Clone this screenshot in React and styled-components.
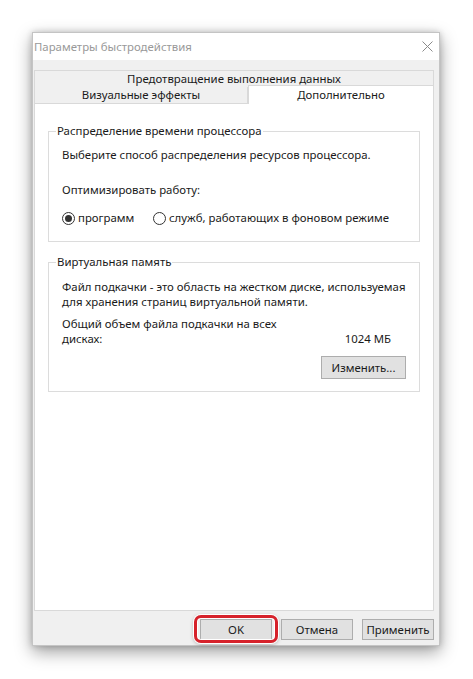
import React from 'react';
import styled, { createGlobalStyle } from 'styled-components';

const GlobalStyle = createGlobalStyle`
    html, body {
        margin: 0;
        background: #ffffff;
    }
    body {
        font-family: "Noto Sans", "Open Sans", sans-serif;
        font-size: 11.4px;
        color: #1a1a1a;
    }
`;

const Page = styled.div`
    padding: 32px 0 0 32px;
    width: 473px;
    height: 679px;
    box-sizing: border-box;
`;

const Window = styled.div`
    width: 408px;
    height: 614px;
    display: flex;
    flex-direction: column;
    background: #f0f0f0;
    border: 1px solid #c4c4c4;
    box-sizing: border-box;
    box-shadow: 0 6px 16px rgba(0, 0, 0, 0.38), 0 0 6px rgba(0, 0, 0, 0.18);
`;

const TitleBar = styled.div`
    height: 27px;
    flex: none;
    background: #ffffff;
    display: flex;
    align-items: center;
    justify-content: space-between;
    padding: 0 6px 0 1px;
`;

const Title = styled.span`
    color: #999999;
`;

const CloseIcon = () => (
    <svg width="11" height="11" viewBox="0 0 11 11">
        <path d="M0.5 0.5 L10.5 10.5 M10.5 0.5 L0.5 10.5" stroke="#8a8a8a" strokeWidth="1" />
    </svg>
);

const Body = styled.div`
    flex: 1;
    display: flex;
    flex-direction: column;
    padding: 10px 5px 0 1px;
    min-height: 0;
`;

const TabRow = styled.div`
    display: flex;
    align-items: flex-end;
    height: ${p => p.$h}px;
    margin-bottom: ${p => (p.$last ? -1 : 0)}px;
`;

const Tab = styled.div`
    flex: ${p => (p.$w ? `0 0 ${p.$w}px` : 1)};
    height: ${p => (p.$active ? 19 : p.$h)}px;
    box-sizing: border-box;
    display: flex;
    align-items: ${p => (p.$active ? 'flex-start' : 'center')};
    justify-content: center;
    background: ${p => (p.$active ? '#ffffff' : '#f0f0f0')};
    border: 1px solid #d9d9d9;
    border-bottom: ${p => (p.$active ? 'none' : '1px solid #d9d9d9')};
    border-top: ${p => (p.$noTop ? 'none' : '1px solid #d9d9d9')};
    position: relative;
    z-index: ${p => (p.$active ? 2 : 1)};
    line-height: 16px;
    padding-top: ${p => (p.$active ? 1 : 0)}px;
`;

const Panel = styled.div`
    flex: 1;
    background: #ffffff;
    border: 1px solid #d9d9d9;
    padding: 19px 13px 0 13px;
    display: flex;
    flex-direction: column;
`;

const Group = styled.fieldset`
    margin: 0 0 ${p => p.$mb || 0}px 0;
    padding: 0 13px ${p => p.$pb}px 13px;
    border: 1px solid #dcdcdc;
    min-width: 0;
`;

const Legend = styled.legend`
    padding: 0 1px;
    margin-left: -6px;
    line-height: 16px;
`;

const Line = styled.div`
    line-height: ${p => p.$lh || 16}px;
    margin-top: ${p => p.$mt}px;
`;

const RadioRow = styled.div`
    display: flex;
    align-items: center;
    margin-top: 12px;
    line-height: 16px;
`;

const RadioLabel = styled.label`
    display: flex;
    align-items: center;
    gap: 3px;
    width: ${p => (p.$w ? `${p.$w}px` : 'auto')};
`;

const RadioCircle = styled.span`
    width: 11px;
    height: 11px;
    border: 1px solid #333333;
    border-radius: 50%;
    display: flex;
    align-items: center;
    justify-content: center;
    flex: none;
    &::after {
        content: '';
        width: 7px;
        height: 7px;
        border-radius: 50%;
        background: ${p => (p.$checked ? '#333333' : 'transparent')};
    }
`;

const SizeRow = styled.div`
    display: flex;
    align-items: flex-end;
    justify-content: space-between;
    margin-top: 7px;
    line-height: 15px;
`;

const SizeLabel = styled.div`
    width: 222px;
`;

const SizeValue = styled.div`
    padding-right: 15px;
`;

const ButtonRow = styled.div`
    display: flex;
    justify-content: flex-end;
    margin-top: ${p => p.$mt}px;
    gap: 9px;
`;

const Button = styled.button`
    width: ${p => p.$w}px;
    height: ${p => p.$h}px;
    background: #e1e1e1;
    border: 1px solid #adadad;
    font-family: inherit;
    font-size: inherit;
    color: #1a1a1a;
    padding: 0;
    position: relative;
`;

const Highlight = styled.span`
    position: absolute;
    left: -7px;
    right: -7px;
    top: -5px;
    bottom: -4px;
    border: 3px solid #d6222b;
    border-radius: 7px;
    box-shadow: 0 0 0 1px #ffffff, 0 1px 4px rgba(0, 0, 0, 0.35), inset 0 0 0 1px #ffffff;
    pointer-events: none;
`;

const Footer = styled.div`
    height: 34px;
    flex: none;
    display: flex;
    justify-content: flex-end;
    align-items: flex-start;
    padding-top: 8px;
    box-sizing: border-box;
    gap: 9px;
`;

export default function App() {
    return (
        <Page>
            <GlobalStyle />
            <Window>
                <TitleBar>
                    <Title>Параметры быстродействия</Title>
                    <CloseIcon />
                </TitleBar>
                <Body>
                    <TabRow $h={18}>
                        <Tab $h={18}>Предотвращение выполнения данных</Tab>
                    </TabRow>
                    <TabRow $h={16} $last>
                        <Tab $w={214} $h={17} $noTop>Визуальные эффекты</Tab>
                        <Tab $active>Дополнительно</Tab>
                    </TabRow>
                    <Panel>
                        <Group $pb={15} $mb={12}>
                            <Legend>Распределение времени процессора</Legend>
                            <Line $mt={8}>Выберите способ распределения ресурсов процессора.</Line>
                            <Line $mt={19}>Оптимизировать работу:</Line>
                            <RadioRow>
                                <RadioLabel $w={91}>
                                    <RadioCircle $checked />
                                    программ
                                </RadioLabel>
                                <RadioLabel>
                                    <RadioCircle />
                                    служб, работающих в фоновом режиме
                                </RadioLabel>
                            </RadioRow>
                        </Group>
                        <Group $pb={12}>
                            <Legend>Виртуальная память</Legend>
                            <Line $mt={9} $lh={15}>
                                Файл подкачки - это область на жестком диске, используемая для хранения страниц виртуальной памяти.
                            </Line>
                            <SizeRow>
                                <SizeLabel>Общий объем файла подкачки на всех дисках:</SizeLabel>
                                <SizeValue>1024 МБ</SizeValue>
                            </SizeRow>
                            <ButtonRow $mt={10}>
                                <Button $w={85} $h={23}>Изменить...</Button>
                            </ButtonRow>
                        </Group>
                    </Panel>
                    <Footer>
                        <Button $w={72} $h={21}>
                            OK
                            <Highlight />
                        </Button>
                        <Button $w={72} $h={21}>Отмена</Button>
                        <Button $w={72} $h={21}>Применить</Button>
                    </Footer>
                </Body>
            </Window>
        </Page>
    );
}
